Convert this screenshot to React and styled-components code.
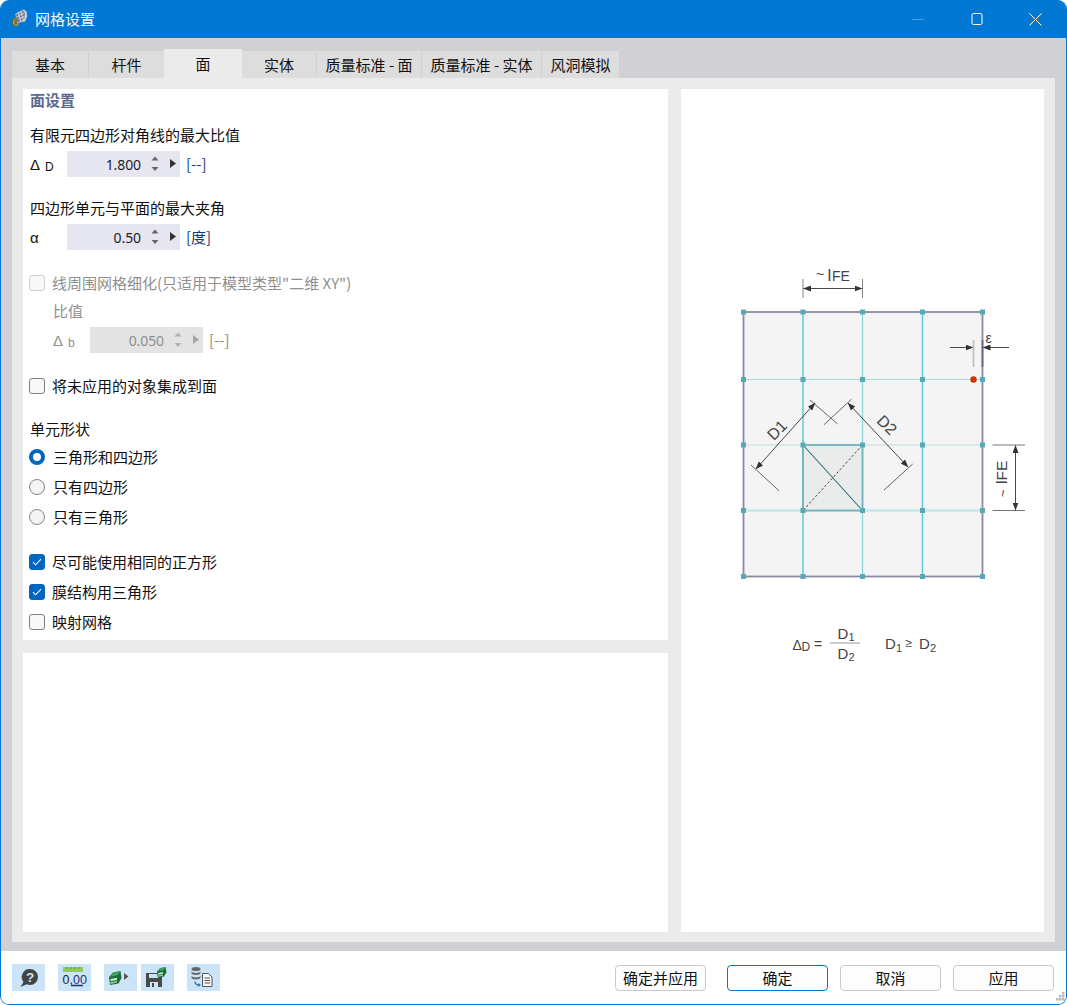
import React from "react";
import styled, { createGlobalStyle } from "styled-components";

const Global = createGlobalStyle`
  html, body { margin: 0; padding: 0; background: #fff; }
  * { box-sizing: border-box; }
  body { font-family: "Noto Sans", "Noto Sans CJK SC", "Liberation Sans", sans-serif; font-size: 15px; color: #111; }
`;

const Window = styled.div`
  position: relative;
  width: 1067px;
  height: 1005px;
  display: flex;
  flex-direction: column;
  border: 1px solid #0078d4;
  border-top: 0;
  border-radius: 9px;
  overflow: hidden;
  background: #fff;
`;
const TitleBar = styled.header`
  flex: 0 0 38px;
  margin: 0 -1px;
  display: flex;
  align-items: center;
  background: #0078d4;
  color: #fff;
  padding-left: 10px;
`;
const Title = styled.span`
  font-size: 15px;
  line-height: 20px;
  margin-left: 7px;
  color: #f2f8fd;
  font-family: "Noto Sans CJK SC", sans-serif;
`;
const WinControls = styled.div`
  margin-left: auto;
  display: flex;
  height: 100%;
  padding-right: 2px;
`;
const WinButton = styled.div`
  width: 59px;
  display: flex;
  align-items: center;
  justify-content: center;
`;
const Body = styled.main`
  flex: 0 0 913px;
  display: flex;
  flex-direction: column;
  background: #d1d0d5;
  padding: 11px 11px 9px 11px;
`;
const TabBar = styled.nav`
  flex: 0 0 29px;
  display: flex;
  align-items: flex-end;
  gap: 1px;
`;
const Tab = styled.div`
  width: ${(p) => p.$w}px;
  height: ${(p) => (p.$active ? 29 : 27)}px;
  background: ${(p) => (p.$active ? "#ebebeb" : "#dddddd")};
  margin-right: ${(p) => (p.$flush ? -1 : 0)}px;
  display: flex;
  align-items: center;
  justify-content: center;
  font-family: "Noto Sans CJK SC", sans-serif;
  font-size: 15px;
  line-height: 20px;
  color: #111;
  white-space: nowrap;
`;
const Content = styled.section`
  flex: 1;
  background: #ebebeb;
  padding: 11px 11px 10px 11px;
  display: grid;
  grid-template-columns: 645px 363px;
  column-gap: 13px;
`;
const LeftColumn = styled.div`
  display: grid;
  grid-template-rows: 551px 279px;
  row-gap: 13px;
`;
const Panel = styled.div`
  background: #fff;
  min-width: 0;
`;
const SettingsPanel = styled(Panel)`
  padding-left: 6px;
  display: flex;
  flex-direction: column;
`;
const FigurePanel = styled(Panel)`
  display: flex;
  align-items: center;
  justify-content: center;
`;
const Heading = styled.div`
  height: 24px;
  line-height: 22px;
  margin-left: 1px;
  font-family: "Noto Sans CJK SC", sans-serif;
  font-weight: 700;
  color: #5b6a8f;
`;
const Label = styled.div`
  height: 24px;
  line-height: 24px;
  margin-top: ${(p) => p.$top || 0}px;
  margin-left: ${(p) => p.$indent || 1}px;
  color: ${(p) => (p.$disabled ? "#8f8f8f" : "#111")};
  font-family: "Noto Sans CJK SC", sans-serif;
`;
const FieldRow = styled.div`
  height: 26px;
  display: flex;
  align-items: center;
  margin-top: ${(p) => p.$top || 0}px;
  margin-left: ${(p) => p.$indent || 0}px;
`;
const Symbol = styled.span`
  width: 38px;
  display: flex;
  align-items: baseline;
  padding-left: 1px;
  font-family: "Liberation Sans", sans-serif;
  font-size: 15px;
  color: ${(p) => (p.$disabled ? "#8f8f8f" : "#111")};
`;
const Sub = styled.span`
  font-size: 12px;
  margin-left: 5px;
  position: relative;
  top: 1px;
`;
const Input = styled.div`
  width: 113px;
  height: 26px;
  display: flex;
  align-items: center;
  padding-right: 4px;
  background: ${(p) => (p.$disabled ? "#e3e3e3" : "#e6e6f1")};
  color: ${(p) => (p.$disabled ? "#8e8e8e" : "#1c1c28")};
`;
const Value = styled.span`
  width: 74px;
  text-align: right;
  font-size: 14px;
  letter-spacing: -0.1px;
`;
const Unit = styled.span`
  margin-left: 6px;
  line-height: 24px;
  font-family: "Noto Sans CJK SC", sans-serif;
  color: ${(p) => (p.$disabled ? "#8c8a78" : "#123f7a")};
`;
const OptionRow = styled.label`
  height: 24px;
  display: flex;
  align-items: center;
  gap: ${(p) => p.$gap || 7}px;
  margin-top: ${(p) => p.$top || 0}px;
  color: ${(p) => (p.$disabled ? "#8f8f8f" : "#111")};
  font-family: "Noto Sans CJK SC", sans-serif;
`;
const OptionText = styled.span`
  line-height: 24px;
`;
const CheckBox = styled.span`
  width: 16px;
  height: 16px;
  border-radius: 3px;
  display: flex;
  align-items: center;
  justify-content: center;
  border: 1px solid ${(p) => (p.$checked ? "#0067c0" : p.$disabled ? "#cfcfcf" : "#7f7f7f")};
  background: ${(p) => (p.$checked ? "#0067c0" : "#f8f8f8")};
`;
const Radio = styled.span`
  width: 16px;
  height: 16px;
  border-radius: 50%;
  border: ${(p) => (p.$checked ? "4.5px solid #0067c0" : "1px solid #858585")};
  background: ${(p) => (p.$checked ? "#fff" : "#f4f4f4")};
`;
const Footer = styled.footer`
  flex: 1;
  display: flex;
  align-items: center;
  padding: 0 12px 0 11px;
  background: #fff;
`;
const ToolButton = styled.div`
  width: 33px;
  height: 27px;
  margin-left: ${(p) => p.$left || 0}px;
  background: #cce4f7;
  display: flex;
  align-items: center;
  justify-content: center;
`;
const Actions = styled.div`
  margin-left: auto;
  display: flex;
`;
const Button = styled.div`
  width: ${(p) => p.$w || 101}px;
  height: 26px;
  margin-left: ${(p) => p.$left || 0}px;
  border: 1px solid ${(p) => (p.$primary ? "#0078d4" : "#c9c9c9")};
  border-radius: 4px;
  background: #fdfdfd;
  display: flex;
  align-items: center;
  justify-content: center;
  font-family: "Noto Sans CJK SC", sans-serif;
  font-size: 15px;
  color: #111;
`;
const Grip = styled.svg`
  position: absolute;
  right: 1px;
  bottom: 1px;
`;

const Stepper = ({ disabled }) => {
  const c = disabled ? "#b0b0b0" : "#666";
  const a = disabled ? "#a5a5a5" : "#333";
  return (
    <svg width="34" height="26" viewBox="0 0 34 26" style={{ marginLeft: "auto" }}>
      <path d="M9.500 9.500 13 5.500 16.500 9.500z" fill={c} />
      <path d="M9.500 16 13 20 16.500 16z" fill={c} />
      <path d="M28 8 34 12.500 28 17z" fill={a} />
    </svg>
  );
};

const Field = ({ sym, sub, value, unit, disabled, top, indent }) => (
  <FieldRow $top={top} $indent={indent}>
    <Symbol $disabled={disabled}>
      {sym}
      {sub && <Sub>{sub}</Sub>}
    </Symbol>
    <Input $disabled={disabled}>
      <Value>{value}</Value>
      <Stepper disabled={disabled} />
    </Input>
    <Unit $disabled={disabled}>{unit}</Unit>
  </FieldRow>
);

const Tick = () => (
  <svg width="10" height="8" viewBox="0 0 10 8">
    <path d="M1 4.200 3.600 6.800 9 1.200" fill="none" stroke="#fff" strokeWidth="1.100" />
  </svg>
);
const CheckOption = ({ checked, disabled, top, children }) => (
  <OptionRow $top={top} $disabled={disabled}>
    <CheckBox $checked={checked} $disabled={disabled}>{checked && <Tick />}</CheckBox>
    <OptionText>{children}</OptionText>
  </OptionRow>
);
const RadioOption = ({ checked, top, children }) => (
  <OptionRow $top={top} $gap={8}>
    <Radio $checked={checked} />
    <OptionText>{children}</OptionText>
  </OptionRow>
);

const AppIcon = () => (
  <svg width="18" height="20" viewBox="0 0 20 22">
    <path d="M5 6 13 1c3-1 6 1 6 5 0 3-1 6-3 8l-7 2z" fill="#6f7d96" />
    <path d="M13 1c3 .5 4 3 3.500 6-.4 2.500-1 5-2.500 7.500l2-.5c2-2 3-5 3-8 0-4-3-6-6-5z" fill="#c9d1de" />
    <path d="M6 6l8-4M7 9l9-5M8 12l8-4M9 15l7-3M9 3l3 11M12 2l3 11" stroke="#e4e9f1" strokeWidth=".9" fill="none" />
    <text x="6" y="19" textAnchor="middle" fontFamily="Liberation Sans" fontWeight="700" fontSize="13" fill="#f0bf2e" stroke="#5a4a10" strokeWidth=".5">6</text>
  </svg>
);

const HelpIcon = () => (
  <svg width="20" height="20" viewBox="0 0 20 20">
    <path d="M11 1a8 8 0 0 1 0 16c-1.200 0-2.300-.3-3.300-.8L1.500 19l3-5A8 8 0 0 1 11 1z" fill="#444" />
    <text x="11" y="14" textAnchor="middle" fontFamily="Liberation Sans" fontWeight="700" fontSize="13.500" fill="#cce4f7">?</text>
  </svg>
);
const DecimalsIcon = () => (
  <svg width="33" height="27" viewBox="0 0 33 27">
    <rect x="5" y="3" width="20" height="5" fill="#8fc95f" />
    <path d="M9 3v2M13 3v2M17 3v2M21 3v2" stroke="#5f9a3a" strokeWidth="1" />
    <text x="4.500" y="19.500" fontFamily="Liberation Sans" fontSize="12.500" fill="#222">0,<tspan fill="#26307a">00</tspan></text>
    <path d="M13 21.500h12" stroke="#26307a" strokeWidth="1.300" />
  </svg>
);
const Drawer = ({ x = 0, y = 0, s = 1 }) => (
  <g transform={`translate(${x} ${y}) scale(${s})`}>
    <path d="M0 6 4 1.500 11.500 0l1 7-3 5.500L1 14z" fill="#1f6b38" />
    <path d="M4 1.500 11.500 0 9 4 1 6z" fill="#3fa45a" />
    <path d="M1.500 8 8 6.800v2.200L1.500 10.300z" fill="#bfe8c6" />
    <path d="M1.500 11.300 8 10v1.500L1.500 13z" fill="#8fd6a0" />
  </g>
);
const ExportIcon = () => (
  <svg width="33" height="27" viewBox="0 0 33 27">
    <Drawer x={5} y={7} />
    <path d="M20 9 24.500 12.500 20 16z" fill="#555" />
  </svg>
);
const SaveIcon = () => (
  <svg width="33" height="27" viewBox="0 0 33 27">
    <path d="M5 9h14l2 2v12H5z" fill="#4a4a4a" />
    <rect x="8" y="10" width="9" height="4" fill="#cce4f7" />
    <rect x="9" y="18" width="8" height="5" fill="#cce4f7" />
    <rect x="11" y="19" width="2" height="4" fill="#4a4a4a" />
    <Drawer x={16} y={3} s={0.75} />
  </svg>
);
const DbIcon = () => (
  <svg width="33" height="27" viewBox="0 0 33 27">
    <ellipse cx="9" cy="5" rx="4.500" ry="2" fill="#666" />
    <path d="M4.500 7c0 1.100 2 2 4.500 2s4.500-.9 4.500-2v2c0 1.100-2 2-4.500 2s-4.500-.9-4.500-2z" fill="#666" />
    <path d="M4.500 11.500c0 1.100 2 2 4.500 2s4.500-.9 4.500-2v2c0 1.100-2 2-4.500 2s-4.500-.9-4.500-2z" fill="#666" />
    <path d="M8 17.500c0 2.500 1.500 3.500 4 3.500" fill="none" stroke="#3a6ea5" strokeWidth="1.300" />
    <path d="M11 19 14 21 11 23z" fill="#3a6ea5" />
    <path d="M15.500 9.500h6l3.500 3.500v9.500h-9.500z" fill="#f8f8f8" stroke="#555" />
    <path d="M17.500 14h5.500M17.500 16.500h5.500M17.500 19h5.500" stroke="#555" />
  </svg>
);

const xs = [743.5, 803, 862.5, 922.5, 982.5];
const ys = [312, 379.5, 445, 510.5, 576.5];

const ArrowDefs = () => (
  <defs>
    <marker id="ah" viewBox="0 0 8 6" refX="7.500" refY="3" markerWidth="8" markerHeight="6" orient="auto-start-reverse" markerUnits="userSpaceOnUse">
      <path d="M0 0 8 3 0 6z" fill="#333" />
    </marker>
  </defs>
);

const Mesh = () => (
  <svg width="345" height="491" viewBox="690 265 345 491" fontFamily="Liberation Sans, sans-serif">
    <ArrowDefs />
    <rect x="743.500" y="312" width="239" height="264.500" fill="#f4f4f4" />
    <g stroke="#a6d9dd" strokeWidth="1">
      <path d="M743 379.500H983" />
      <path d="M743 445H983" stroke="#bfdfe1" />
      <path d="M743 510.500H983" stroke="#c6e8ea" strokeWidth="2.500" />
    </g>
    <path d="M803 312V577M922.500 312V577" stroke="#5fc9d5" strokeWidth="1.500" />
    <path d="M862.500 312V577" stroke="#8bd8de" strokeWidth="1.300" />
    <rect x="803" y="445" width="59.500" height="65.500" fill="#e9eceb" stroke="#6fb3bc" strokeWidth="1.800" />
    <path d="M803 445 862.500 510.500" stroke="#a6dde1" strokeWidth="1.400" />
    <path d="M803 445 862.500 510.500" stroke="#1f3f4a" strokeWidth=".8" />
    <path d="M862.500 445 803 510.500" stroke="#444" strokeWidth="1" strokeDasharray="2.500 2" />
    <rect x="743.500" y="312" width="239" height="264.500" fill="none" stroke="#8a8aa2" strokeWidth="1.800" />
    {ys.flatMap((y) => xs.map((x) => <rect key={`${x}-${y}`} x={x - 2.500} y={y - 2.500} width="5" height="5" fill="#5aa8b4" />))}
    <circle cx="973.500" cy="379.500" r="3.200" fill="#cc3300" />

    <g stroke="#555" strokeWidth=".9" fill="none">
      <path d="M803 279V298M862.500 279V298" stroke="#777" />
      <path d="M803.500 288.500H862" stroke="#333" markerStart="url(#ah)" markerEnd="url(#ah)" />
      <path d="M950 347.500H973" stroke="#333" markerEnd="url(#ah)" />
      <path d="M1009 347.500H983" stroke="#333" markerEnd="url(#ah)" />
      <path d="M973.500 340V367" stroke="#bdbdbd" strokeWidth="1.600" />
      <path d="M982.500 340V367" stroke="#6b6b80" strokeWidth="1.800" />
      <path d="M810 400 837.700 424M851.700 399 824 424.700M751 465 779 490.700M912.700 464 884 490" />
      <path d="M756 469 815 403" stroke="#333" markerStart="url(#ah)" markerEnd="url(#ah)" />
      <path d="M848 403 908 467" stroke="#333" markerStart="url(#ah)" markerEnd="url(#ah)" />
      <path d="M992.500 445H1025M992.500 510.500H1025" stroke="#666" />
      <path d="M1015.500 445.500V510" stroke="#333" markerStart="url(#ah)" markerEnd="url(#ah)" />
    </g>

    <g fill="#444" fontSize="14">
      <text x="816" y="279" fontSize="14">~</text>
      <text x="827.500" y="280.500" fontSize="17">l</text>
      <text x="832" y="281" fontSize="14">FE</text>
      <text x="985.500" y="343" fontSize="14">ε</text>
      <text x="777" y="435.500" textAnchor="middle" fontSize="16" transform="rotate(-45 777 430)">D1</text>
      <text x="887" y="430.500" textAnchor="middle" fontSize="16" transform="rotate(45 887 425)">D2</text>
      <text transform="translate(1007 484) rotate(-90)" fontSize="15.500">lFE</text>
      <text transform="translate(1007 497) rotate(-90)" fontSize="13">~</text>
      <text x="792.500" y="649.500" fontSize="14">Δ</text>
      <text x="801.500" y="651" fontSize="12">D</text>
      <text x="814" y="648.500" fontSize="14">=</text>
      <text x="837.500" y="639" fontSize="15">D</text>
      <text x="848.500" y="641" fontSize="11">1</text>
      <text x="837.500" y="658.500" fontSize="15">D</text>
      <text x="848.500" y="661" fontSize="11">2</text>
      <path d="M830 643H860" stroke="#999" strokeWidth="1" />
      <text x="885" y="649" fontSize="15">D</text>
      <text x="896" y="651.500" fontSize="11">1</text>
      <text x="905.500" y="646.500" fontSize="12">≥</text>
      <text x="919" y="649" fontSize="15">D</text>
      <text x="930" y="651.500" fontSize="11">2</text>
    </g>
  </svg>
);

const tabs = [
  ["基本", 76],
  ["杆件", 75, false, true],
  ["面", 78, true, true],
  ["实体", 74],
  ["质量标准 - 面", 104],
  ["质量标准 - 实体", 119],
  ["风洞模拟", 77],
];

export default function App() {
  return (
    <>
      <Global />
      <Window>
        <TitleBar>
          <AppIcon />
          <Title>网格设置</Title>
          <WinControls>
            <WinButton>
              <svg width="12" height="12" viewBox="0 0 12 12"><path d="M0 6.500H12" stroke="#4a9fe0" /></svg>
            </WinButton>
            <WinButton>
              <svg width="12" height="12" viewBox="0 0 12 12"><rect x="1" y=".500" width="10" height="11" rx="1.500" fill="none" stroke="#fff" /></svg>
            </WinButton>
            <WinButton>
              <svg width="13" height="13" viewBox="0 0 13 13"><path d="M.5.500 12.500 12.500M12.500.500.500 12.500" stroke="#fff" /></svg>
            </WinButton>
          </WinControls>
        </TitleBar>
        <Body>
          <TabBar>
            {tabs.map(([t, w, a, f]) => (
              <Tab key={t} $w={w} $active={a} $flush={f}>{t}</Tab>
            ))}
          </TabBar>
          <Content>
            <LeftColumn>
              <SettingsPanel>
                <Heading>面设置</Heading>
                <Label $top={10}>有限元四边形对角线的最大比值</Label>
                <Field top={4} sym="Δ" sub="D" value="1.800" unit="[--]" />
                <Label $top={19}>四边形单元与平面的最大夹角</Label>
                <Field top={4} sym="α" value="0.50" unit="[度]" />
                <CheckOption top={21} disabled>线周围网格细化(只适用于模型类型"二维 XY")</CheckOption>
                <Label $top={4} $indent={24} $disabled>比值</Label>
                <Field top={4} indent={23} disabled sym="Δ" sub="b" value="0.050" unit="[--]" />
                <CheckOption top={21}>将未应用的对象集成到面</CheckOption>
                <Label $top={19}>单元形状</Label>
                <RadioOption top={4} checked>三角形和四边形</RadioOption>
                <RadioOption top={6}>只有四边形</RadioOption>
                <RadioOption top={6}>只有三角形</RadioOption>
                <CheckOption top={21} checked>尽可能使用相同的正方形</CheckOption>
                <CheckOption top={6} checked>膜结构用三角形</CheckOption>
                <CheckOption top={6}>映射网格</CheckOption>
              </SettingsPanel>
              <Panel />
            </LeftColumn>
            <FigurePanel>
              <Mesh />
            </FigurePanel>
          </Content>
        </Body>
        <Footer>
          <ToolButton><HelpIcon /></ToolButton>
          <ToolButton $left={13}><DecimalsIcon /></ToolButton>
          <ToolButton $left={13}><ExportIcon /></ToolButton>
          <ToolButton $left={4}><SaveIcon /></ToolButton>
          <ToolButton $left={13}><DbIcon /></ToolButton>
          <Actions>
            <Button $w={91}>确定并应用</Button>
            <Button $primary $left={21}>确定</Button>
            <Button $left={12}>取消</Button>
            <Button $left={12}>应用</Button>
          </Actions>
        </Footer>
        <Grip width="10" height="12" viewBox="0 0 10 12">
          {[[7, 1], [4, 4], [7, 4], [1, 7], [4, 7], [7, 7]].map(([x, y]) => (
            <rect key={`${x}${y}`} x={x} y={y} width="2.500" height="2.500" fill="#b8b8b8" />
          ))}
        </Grip>
      </Window>
    </>
  );
}
